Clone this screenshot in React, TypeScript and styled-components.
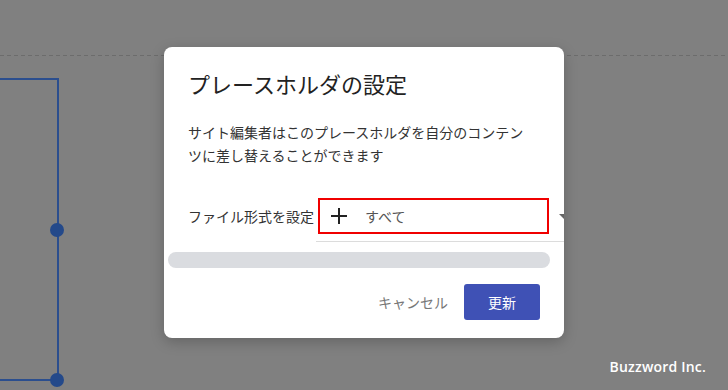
import React from 'react';
import styled, { createGlobalStyle } from 'styled-components';

const GlobalStyle = createGlobalStyle`
	html, body {
		margin: 0;
		padding: 0;
	}

	body {
		font-family: 'Noto Sans CJK JP', 'Noto Sans', sans-serif;
		background: #808080;
	}
`;

const App: React.FunctionComponent = () => (
	<Page>
		<GlobalStyle />
		<Canvas width={728} height={390} viewBox={'0 0 728 390'}>
			<line x1={0} y1={55.5} x2={728} y2={55.5} stroke={'#6c6c6c'} strokeWidth={1} strokeDasharray={'4 3'} />
			<polyline points={'0,79 58,79 58,380 0,380'} fill={'none'} stroke={'#2b4e8e'} strokeWidth={2} />
			<circle cx={57} cy={230} r={7} fill={'#24498a'} />
			<circle cx={57} cy={380} r={7} fill={'#24498a'} />
		</Canvas>
		<Dialog>
			<Title>{'プレースホルダの設定'}</Title>
			<Description>
				{'サイト編集者はこのプレースホルダを自分のコンテン'}
				<br />
				{'ツに差し替えることができます'}
			</Description>
			<FieldRow>
				<FieldLabel>{'ファイル形式を設定'}</FieldLabel>
				<Select>
					<Highlight>
						<PlusIcon width={18} height={18} viewBox={'0 0 18 18'}>
							<path d={'M9 1v16M1 9h16'} stroke={'#222'} strokeWidth={2} fill={'none'} />
						</PlusIcon>
						<SelectValue>{'すべて'}</SelectValue>
					</Highlight>
					<Caret />
				</Select>
			</FieldRow>
			<ScrollBar />
			<Actions>
				<TextButton>{'キャンセル'}</TextButton>
				<PrimaryButton>{'更新'}</PrimaryButton>
			</Actions>
		</Dialog>
		<Watermark>{'Buzzword Inc.'}</Watermark>
	</Page>
);

export default App;

const Page = styled.div`
	position: relative;
	width: 728px;
	height: 390px;
	overflow: hidden;
	display: flex;
	justify-content: center;
	align-items: flex-start;
	padding-top: 47px;
	box-sizing: border-box;
`;

const Canvas = styled.svg`
	position: absolute;
	left: 0;
	top: 0;
`;

const Dialog = styled.div`
	position: relative;
	width: 400px;
	height: 291px;
	box-sizing: border-box;
	padding: 22px 24px 16px;
	background: #fff;
	border-radius: 8px;
	box-shadow: 0 4px 14px rgba(0, 0, 0, 0.22);
	overflow: hidden;
	display: flex;
	flex-direction: column;
`;

const Title = styled.h2`
	margin: 0;
	font-size: 22px;
	line-height: 28px;
	font-weight: 400;
	color: #222;
	white-space: nowrap;
`;

const Description = styled.p`
	margin: 24px 0 0;
	font-size: 14px;
	line-height: 23px;
	color: #333;
	white-space: nowrap;
`;

const FieldRow = styled.div`
	display: flex;
	align-items: flex-start;
	margin-top: 31px;
`;

const FieldLabel = styled.span`
	font-size: 14px;
	line-height: 36px;
	color: #333;
	white-space: nowrap;
	width: 128px;
	flex-shrink: 0;
`;

const Select = styled.div`
	position: relative;
	flex-shrink: 0;
	width: 270px;
	height: 44px;
	box-sizing: border-box;
	border-bottom: 1px solid #dcdcdc;
	padding: 0 0 0 2px;
	display: flex;
	align-items: flex-start;
`;

const Highlight = styled.div`
	width: 231px;
	height: 36px;
	flex-shrink: 0;
	box-sizing: border-box;
	border: 2px solid #f00000;
	display: flex;
	align-items: center;
	padding-left: 10px;
	gap: 17px;
`;

const PlusIcon = styled.svg`
	display: block;
	flex-shrink: 0;
`;

const SelectValue = styled.span`
	font-size: 14px;
	color: #555;
`;

const Caret = styled.span`
	position: absolute;
	left: 243px;
	top: 16px;
	width: 0;
	height: 0;
	border-left: 5px solid transparent;
	border-right: 5px solid transparent;
	border-top: 5px solid #666;
`;

const ScrollBar = styled.div`
	height: 16px;
	margin: 10px -10px 0 -20px;
	border-radius: 8px;
	background: #dadce0;
`;

const Actions = styled.div`
	display: flex;
	justify-content: flex-end;
	align-items: center;
	gap: 8px;
	margin-top: 16px;
`;

const TextButton = styled.button`
	border: none;
	background: none;
	padding: 0 8px;
	height: 36px;
	font-family: inherit;
	font-size: 14px;
	color: #777;
`;

const PrimaryButton = styled.button`
	border: none;
	border-radius: 3px;
	width: 76px;
	height: 36px;
	background: #3f51b5;
	color: #fff;
	font-family: inherit;
	font-size: 14px;
`;

const Watermark = styled.div`
	position: absolute;
	right: 22px;
	bottom: 14px;
	font-family: 'Open Sans', 'Liberation Sans', sans-serif;
	font-size: 14px;
	font-weight: 600;
	color: #fff;
	letter-spacing: 0.2px;
`;
